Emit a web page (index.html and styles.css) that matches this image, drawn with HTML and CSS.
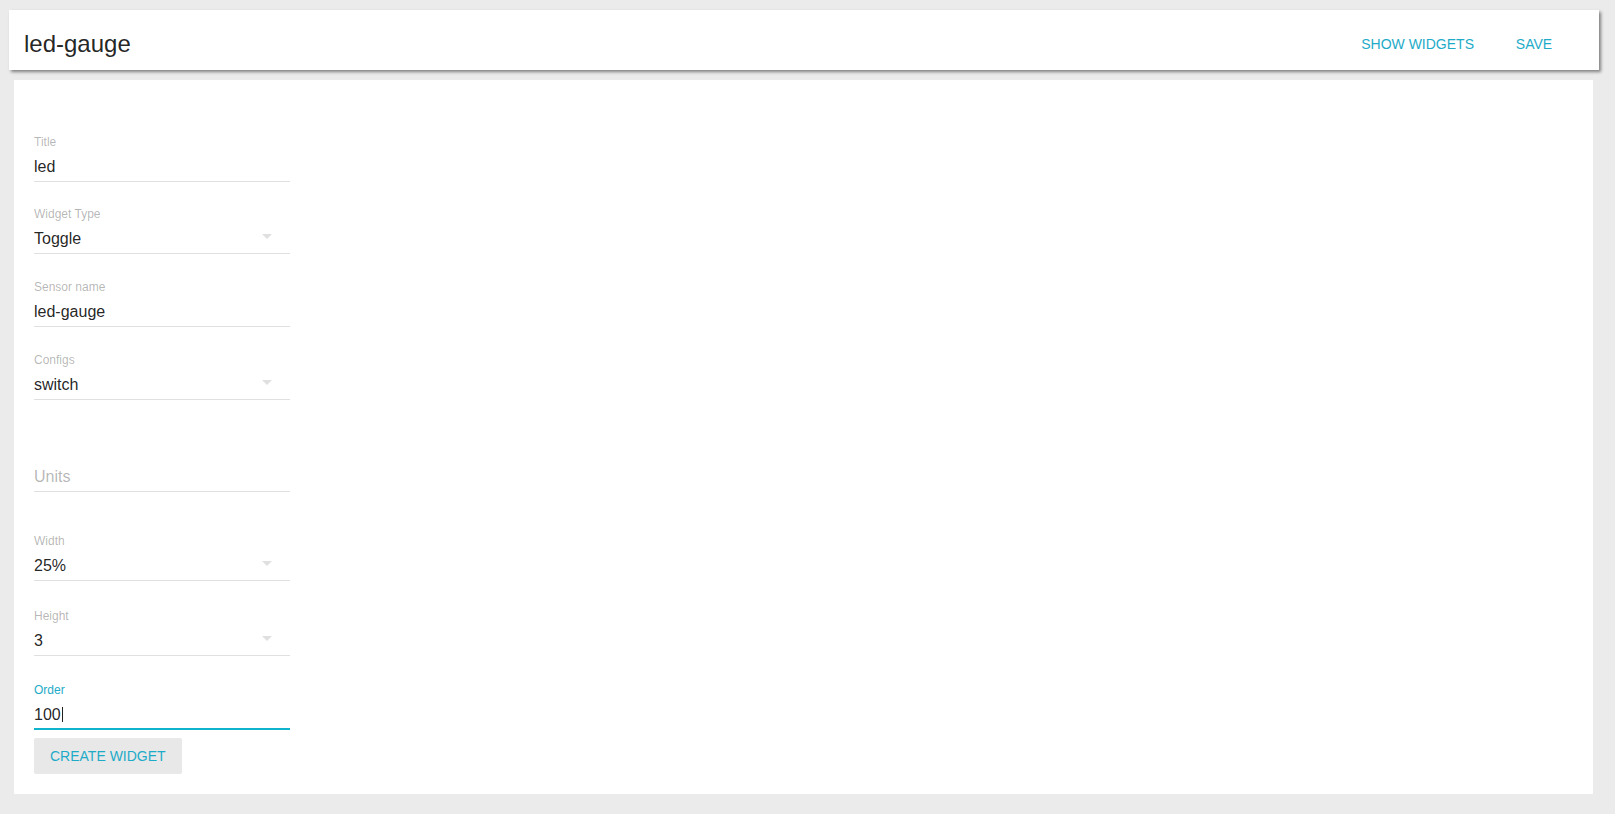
FILE: index.html
```html
<!DOCTYPE html>
<html lang="en">
<head>
<meta charset="utf-8">
<title>led-gauge</title>
<link rel="stylesheet" href="styles.css">
</head>
<body>
<header class="appbar">
  <h1 class="appbar-title">led-gauge</h1>
  <div class="appbar-actions">
    <button class="flat-btn">Show widgets</button>
    <button class="flat-btn">Save</button>
  </div>
</header>
<main class="panel">
  <form class="form">
    <div class="field">
      <label class="field-label">Title</label>
      <div class="field-value">led</div>
      <div class="field-line"></div>
    </div>
    <div class="field">
      <label class="field-label">Widget Type</label>
      <div class="field-value">Toggle
        <svg class="arrow" width="10" height="5" viewBox="0 0 10 5"><path d="M0 0l5 5 5-5z" fill="#e0e0e0"/></svg>
      </div>
      <div class="field-line"></div>
    </div>
    <div class="field field-sensor">
      <label class="field-label">Sensor name</label>
      <div class="field-value">led-gauge</div>
      <div class="field-line"></div>
    </div>
    <div class="field field-configs">
      <label class="field-label">Configs</label>
      <div class="field-value">switch
        <svg class="arrow" width="10" height="5" viewBox="0 0 10 5"><path d="M0 0l5 5 5-5z" fill="#e0e0e0"/></svg>
      </div>
      <div class="field-line"></div>
    </div>
    <div class="field field-units">
      <label class="field-label"></label>
      <div class="field-value hint">Units</div>
      <div class="field-line"></div>
    </div>
    <div class="field field-width">
      <label class="field-label">Width</label>
      <div class="field-value">25%
        <svg class="arrow" width="10" height="5" viewBox="0 0 10 5"><path d="M0 0l5 5 5-5z" fill="#e0e0e0"/></svg>
      </div>
      <div class="field-line"></div>
    </div>
    <div class="field field-height">
      <label class="field-label">Height</label>
      <div class="field-value">3
        <svg class="arrow" width="10" height="5" viewBox="0 0 10 5"><path d="M0 0l5 5 5-5z" fill="#e0e0e0"/></svg>
      </div>
      <div class="field-line"></div>
    </div>
    <div class="field field-order focused">
      <label class="field-label">Order</label>
      <div class="field-value"><span>100<span class="caret"></span></span></div>
      <div class="field-line"></div>
    </div>
    <button type="button" class="create-btn">Create widget</button>
  </form>
</main>
</body>
</html>
```
FILE: styles.css
```css
html, body {
  margin: 0;
  padding: 0;
}
body {
  background: #ebebeb;
  font-family: "Liberation Sans", Arial, sans-serif;
  color: rgba(0, 0, 0, 0.87);
  height: 814px;
  overflow: hidden;
}
.appbar {
  margin: 10px 16px 0 9px;
  height: 60px;
  box-sizing: border-box;
  padding: 0 21px 0 15px;
  background: #fff;
  display: flex;
  justify-content: space-between;
  align-items: flex-start;
  box-shadow: 2px 2px 3px rgba(0, 0, 0, 0.45);
  position: relative;
  z-index: 1;
}
.appbar-title {
  margin: 20px 0 0 0;
  font-size: 24px;
  line-height: 28px;
  font-weight: normal;
  color: rgba(0, 0, 0, 0.87);
}
.appbar-actions {
  display: flex;
  margin-top: 16px;
}
.flat-btn {
  height: 36px;
  min-width: 88px;
  padding: 0 16px;
  border: none;
  background: transparent;
  font-family: "Liberation Sans", Arial, sans-serif;
  font-size: 14px;
  line-height: 36px;
  text-transform: uppercase;
  color: #1eabc8;
  text-align: center;
  border-radius: 2px;
}
.panel {
  display: block;
  margin: 10px 22px 0 14px;
  background: #fff;
  padding: 20px;
}
.form {
  display: flex;
  flex-direction: column;
  align-items: flex-start;
  padding-top: 18px;
}
.field {
  width: 256px;
  height: 72px;
  box-sizing: border-box;
  padding-top: 16px;
  display: flex;
  flex-direction: column;
}
.field-label {
  font-size: 12px;
  line-height: 16px;
  height: 16px;
  color: rgba(0, 0, 0, 0.3);
}
.field-value {
  margin-top: 5px;
  height: 24px;
  font-size: 16px;
  line-height: 24px;
  display: flex;
  justify-content: space-between;
  align-items: flex-start;
  color: rgba(0, 0, 0, 0.87);
}
.field-value.hint {
  color: rgba(0, 0, 0, 0.3);
}
.arrow {
  margin-top: 7px;
  margin-right: 18px;
}
.field-line {
  margin-top: 2px;
  border-top: 1px solid #e0e0e0;
}
.field-sensor {
  margin-top: 1px;
}
.field-configs {
  margin-top: 1px;
}
.field-units {
  margin-top: 20px;
}
.field-width {
  margin-top: 17px;
}
.field-height {
  margin-top: 3px;
}
.field-order {
  margin-top: 2px;
}
.focused .field-label {
  color: #1eabc8;
}
.focused .field-line {
  margin-top: 1px;
  border-top: 2px solid #0fb3cc;
}
.caret {
  display: inline-block;
  width: 1px;
  height: 15px;
  background: #212121;
  vertical-align: -2px;
  margin-left: 1px;
}
.create-btn {
  height: 36px;
  min-width: 88px;
  padding: 0 16px;
  border: none;
  border-radius: 2px;
  background: #e8e8e8;
  font-family: "Liberation Sans", Arial, sans-serif;
  font-size: 14px;
  line-height: 36px;
  text-transform: uppercase;
  color: #1eabc8;
}
```
